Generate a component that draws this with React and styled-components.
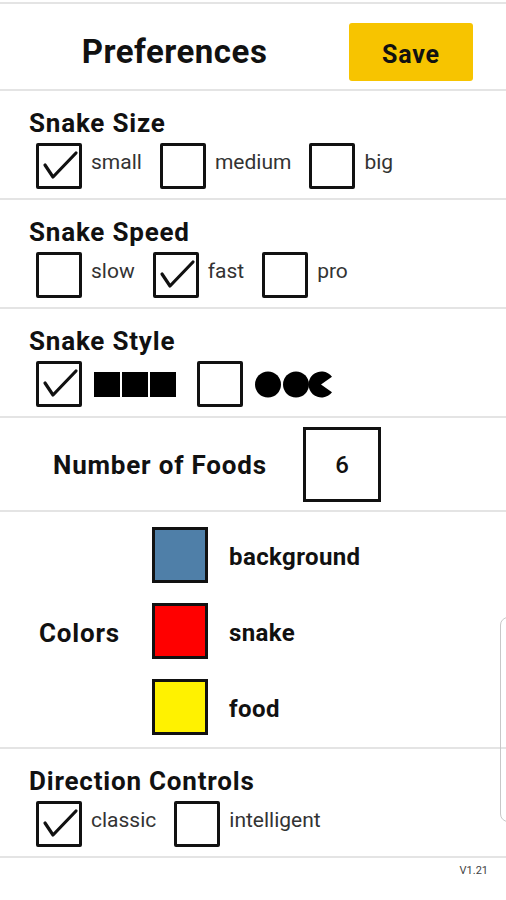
import React from 'react'
import styled, { createGlobalStyle } from 'styled-components'

const GlobalStyle = createGlobalStyle`
  body {
    margin: 0;
    background: #fff;
    font-family: Roboto, "Liberation Sans", sans-serif;
    color: #111;
  }
`

const Page = styled.div`
  position: relative;
  width: 506px;
  height: 900px;
  padding-top: 2px;
  box-sizing: border-box;
  overflow: hidden;
`

const Header = styled.div`
  display: flex;
  align-items: center;
  border-top: 2px solid #e4e4e4;
  border-bottom: 2px solid #e4e4e4;
  padding: 19px 33px 8px 0;
`

const Title = styled.h1`
  flex: 1;
  margin: 0;
  text-align: center;
  font-size: 33px;
  font-weight: 700;
  letter-spacing: 0.5px;
  line-height: 58px;
`

const SaveButton = styled.button`
  width: 124px;
  height: 58px;
  border: none;
  border-radius: 3px;
  background: #f7c400;
  font-family: inherit;
  font-size: 25px;
  font-weight: 700;
  letter-spacing: 0.8px;
  color: #111;
  padding: 5px 0 0;
`

const Section = styled.div`
  border-bottom: 2px solid #e4e4e4;
  padding: 18px 0 9px 29px;
`

const SectionTitle = styled.div`
  font-size: 26px;
  font-weight: 700;
  letter-spacing: 0.8px;
  line-height: 28px;
  margin-bottom: 6px;
`

const OptionRow = styled.div`
  display: flex;
  align-items: flex-start;
  gap: ${p => p.$gap || 18}px;
  margin-left: 7px;
`

const Option = styled.div`
  display: flex;
  align-items: ${p => (p.$center ? 'center' : 'flex-start')};
  gap: ${p => p.$gap || 9}px;
`

const Box = styled.div`
  position: relative;
  width: 46px;
  height: 46px;
  border: 3px solid #111;
  border-radius: 2px;
  box-sizing: border-box;
  flex: none;
`

const OptionLabel = styled.span`
  font-size: 21px;
  line-height: 24px;
  margin-top: 7px;
  color: #333;
`

const Blocks = styled.div`
  display: flex;
  gap: 2px;
`

const Block = styled.div`
  width: 26px;
  height: 25px;
  background: #000;
`

const FoodsRow = styled.div`
  display: flex;
  align-items: center;
  padding: 9px 0 8px 53px;
  border-bottom: 2px solid #e4e4e4;
`

const FoodsLabel = styled.div`
  width: 250px;
  font-size: 26px;
  font-weight: 700;
  letter-spacing: 0.8px;
`

const NumberBox = styled.div`
  width: 78px;
  height: 75px;
  border: 3px solid #111;
  box-sizing: border-box;
  display: flex;
  align-items: center;
  justify-content: center;
  font-size: 24px;
  font-weight: 500;
`

const ColorsBlock = styled.div`
  display: flex;
  align-items: center;
  padding: 15px 0 12px 39px;
  border-bottom: 2px solid #e4e4e4;
`

const ColorsLabel = styled.div`
  width: 113px;
  padding-top: 4px;
  font-size: 26px;
  font-weight: 700;
  letter-spacing: 0.8px;
`

const ColorList = styled.div`
  display: flex;
  flex-direction: column;
  gap: 20px;
`

const ColorRow = styled.div`
  display: flex;
  align-items: center;
  gap: 21px;
`

const Swatch = styled.div`
  width: 56px;
  height: 56px;
  border: 3px solid #111;
  box-sizing: border-box;
  background: ${p => p.$color};
`

const ColorName = styled.span`
  padding-top: 3px;
  font-size: 24px;
  font-weight: 700;
  letter-spacing: 0.4px;
`

const Version = styled.div`
  text-align: right;
  padding: 6px 18px 0 0;
  font-size: 11px;
  color: #444;
`

const ScrollHint = styled.div`
  position: absolute;
  left: 500px;
  top: 617px;
  width: 20px;
  height: 203px;
  border: 1.5px solid #c8c8c8;
  border-radius: 8px;
`

const Check = () => (
  <svg width='40' height='40' viewBox='0 0 40 40' style={{ position: 'absolute', left: 0, top: 0 }}>
    <path d='M6 19 L14 31 L37 7' fill='none' stroke='#111' strokeWidth='3.2' strokeLinecap='round' strokeLinejoin='round' />
  </svg>
)

const Checkbox = ({ checked }) => <Box>{checked && <Check />}</Box>

const Circles = () => (
  <svg width='80' height='27' viewBox='0 0 80 27'>
    <circle cx='13' cy='13.5' r='13' fill='#000' />
    <circle cx='41' cy='13.5' r='13' fill='#000' />
    <path d='M66 13.5 L77 5.8 A13 13 0 1 0 77 21.2 Z' fill='#000' />
  </svg>
)

const CheckGroup = ({ title, options }) => (
  <Section>
    <SectionTitle>{title}</SectionTitle>
    <OptionRow>
      {options.map(o => (
        <Option key={o.label}>
          <Checkbox checked={o.checked} />
          <OptionLabel>{o.label}</OptionLabel>
        </Option>
      ))}
    </OptionRow>
  </Section>
)

export default function App () {
  return (
    <Page>
      <GlobalStyle />
      <Header>
        <Title>Preferences</Title>
        <SaveButton>Save</SaveButton>
      </Header>
      <CheckGroup
        title='Snake Size'
        options={[
          { label: 'small', checked: true },
          { label: 'medium' },
          { label: 'big' }
        ]}
      />
      <CheckGroup
        title='Snake Speed'
        options={[
          { label: 'slow' },
          { label: 'fast', checked: true },
          { label: 'pro' }
        ]}
      />
      <Section>
        <SectionTitle>Snake Style</SectionTitle>
        <OptionRow $gap={21}>
          <Option $center $gap={12}>
            <Checkbox checked />
            <Blocks>
              <Block />
              <Block />
              <Block />
            </Blocks>
          </Option>
          <Option $center $gap={12}>
            <Checkbox />
            <Circles />
          </Option>
        </OptionRow>
      </Section>
      <FoodsRow>
        <FoodsLabel>Number of Foods</FoodsLabel>
        <NumberBox>6</NumberBox>
      </FoodsRow>
      <ColorsBlock>
        <ColorsLabel>Colors</ColorsLabel>
        <ColorList>
          <ColorRow>
            <Swatch $color='#4f7fa8' />
            <ColorName>background</ColorName>
          </ColorRow>
          <ColorRow>
            <Swatch $color='#ff0000' />
            <ColorName>snake</ColorName>
          </ColorRow>
          <ColorRow>
            <Swatch $color='#fff200' />
            <ColorName>food</ColorName>
          </ColorRow>
        </ColorList>
      </ColorsBlock>
      <CheckGroup
        title='Direction Controls'
        options={[
          { label: 'classic', checked: true },
          { label: 'intelligent' }
        ]}
      />
      <Version>V1.21</Version>
      <ScrollHint />
    </Page>
  )
}
